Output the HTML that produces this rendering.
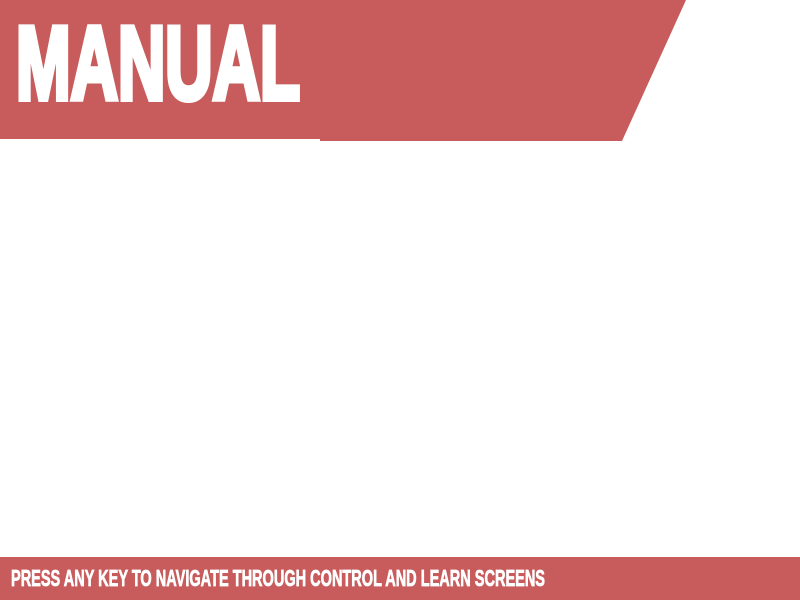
<!DOCTYPE html>
<html><head><meta charset="utf-8"><style>
html,body{margin:0;padding:0;width:800px;height:600px;background:#fff;overflow:hidden;position:relative;font-family:"Liberation Sans",sans-serif;}
svg{position:absolute;left:0;top:0}
.t{position:absolute;color:#fff;font-weight:bold;white-space:nowrap;transform-origin:0 0;line-height:1}
#m{left:16px;top:0px;font-size:104px;-webkit-text-stroke:6px #fff;}
#b{position:absolute;left:0;top:557px;width:800px;height:43px;background:#c85c5c}
#p{left:11px;top:0px;font-size:23px;-webkit-text-stroke:0.8px #fff;}
</style></head><body>
<svg width="800" height="600"><polygon points="0,0 686,0 622,141 320,141 320,139 0,139" fill="#c85c5c"/></svg>
<div id="b"></div>
<div class="t" id="m"><span id="ms" style="display:inline-block;transform-origin:0 0">MANUAL</span></div>
<div class="t" id="p"><span id="ps" style="display:inline-block;transform-origin:0 0">PRESS ANY KEY TO NAVIGATE THROUGH CONTROL AND LEARN SCREENS</span></div>
<script>
function capfix(id,w){var e=document.getElementById(id);var r=e.getBoundingClientRect();e.style.transform='scaleX('+(w/r.width)+')';}
capfix('ms',284);capfix('ps',534);
document.getElementById('m').style.top=(25-104*0.2+8)+'px';
document.getElementById('p').style.top=(570-23*0.2+2)+'px';
</script>
</body></html>
